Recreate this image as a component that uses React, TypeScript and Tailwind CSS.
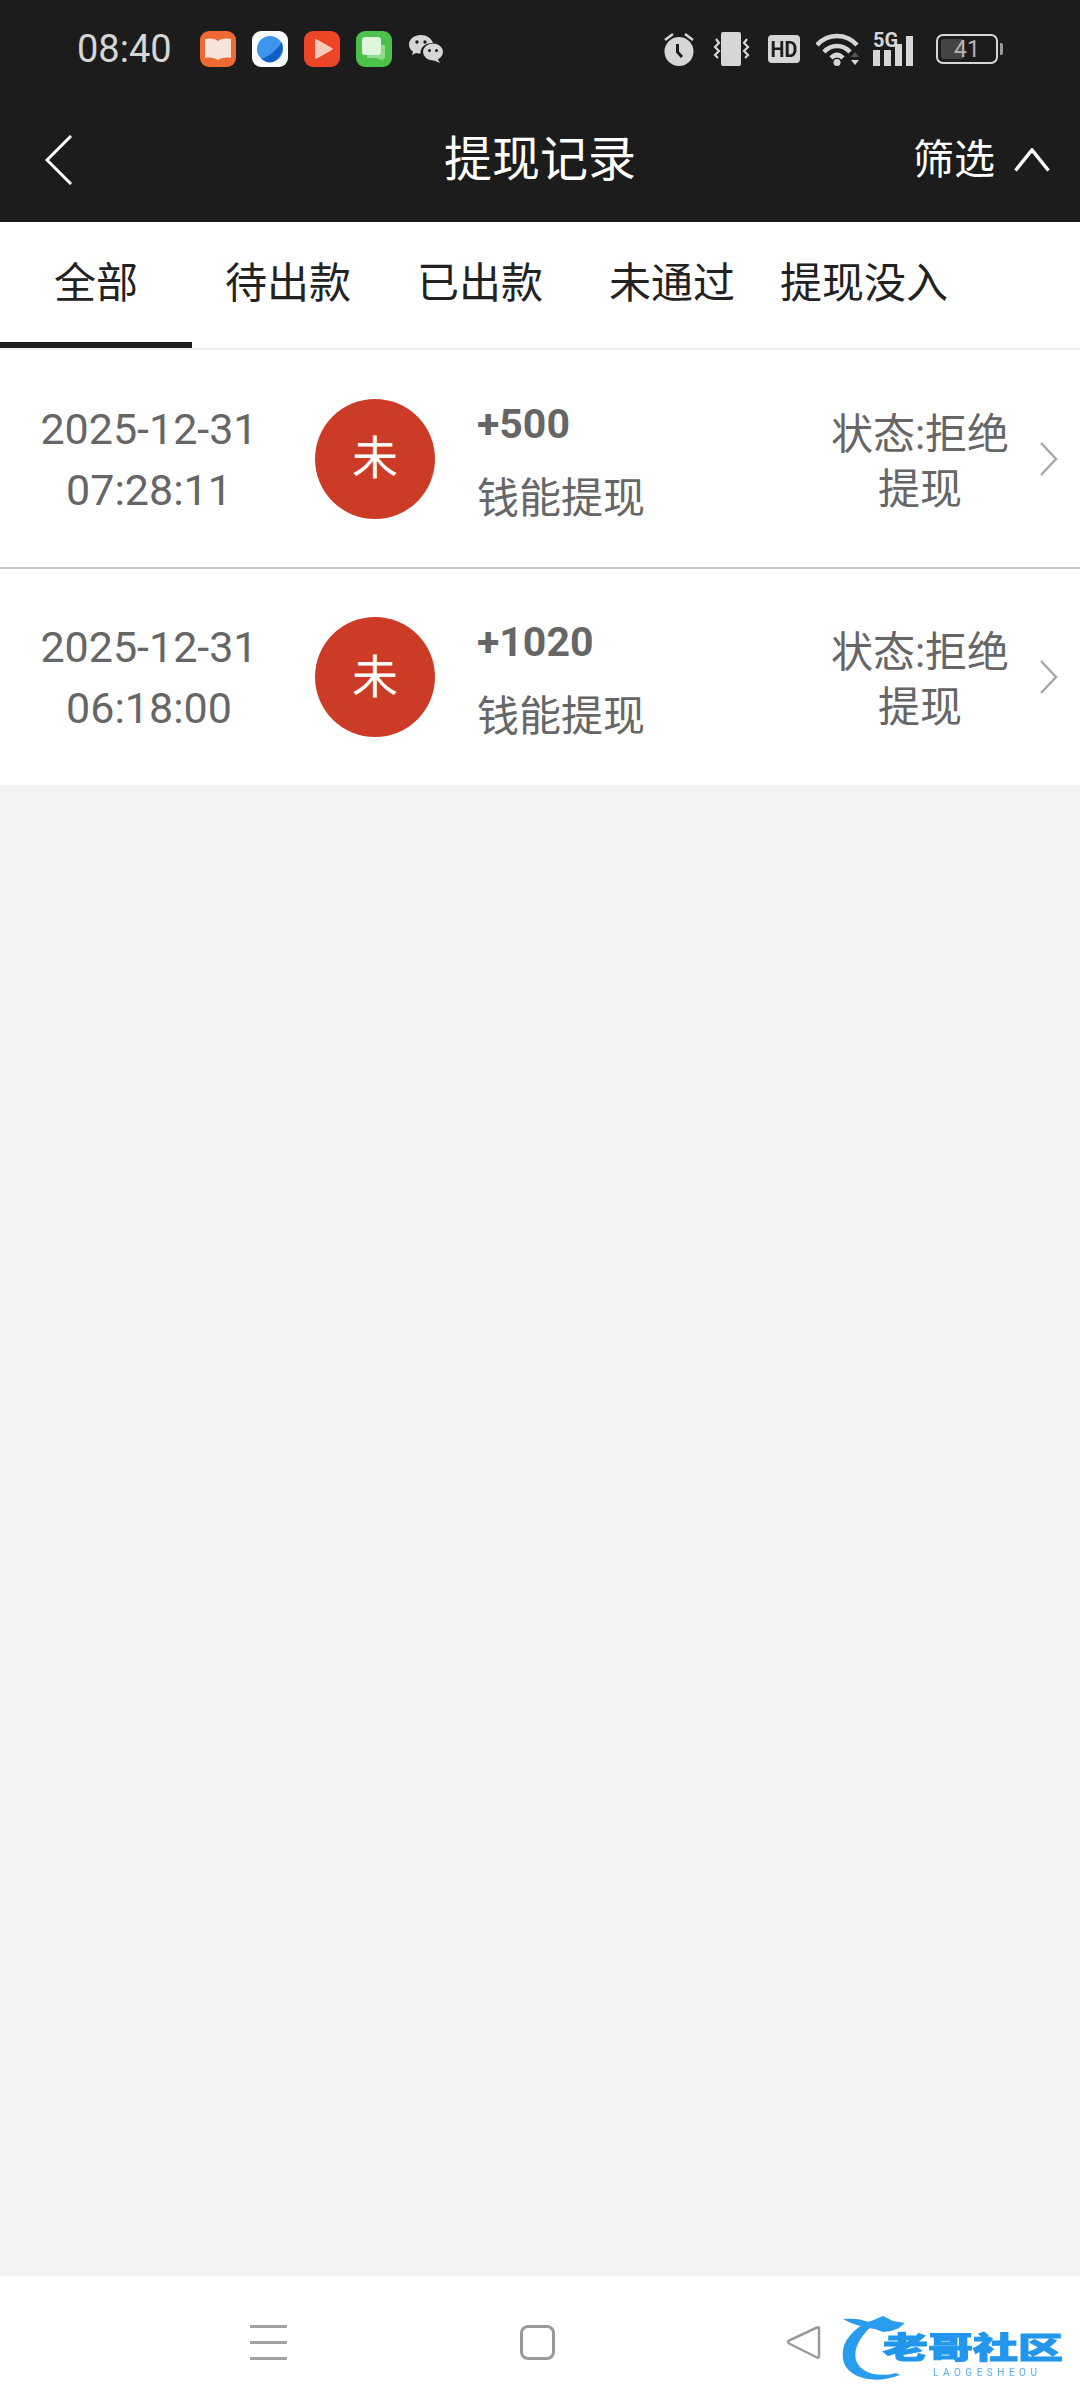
import React from 'react';

const FONT = "font-['Roboto','Noto_Sans_CJK_SC',sans-serif]";

const tabs = ['全部', '待出款', '已出款', '未通过', '提现没入'];

const records = [
  { date: '2025-12-31', time: '07:28:11', amount: '+500', height: 'h-[217px]' },
  { date: '2025-12-31', time: '06:18:00', amount: '+1020', height: 'h-[216px]' },
];

const AppIcons = () => (
  <div className="ml-[28px] flex items-center gap-[16px]">
    <svg width="36" height="36" viewBox="0 0 36 36">
      <rect width="36" height="36" rx="9" fill="#ee6a32" />
      <path d="M5 8c4-1 10-1 13 2 3-3 9-3 13-2v19c-5-1-10 0-13 2-3-2-8-3-13-2z" fill="#f6e4da" />
    </svg>
    <svg width="36" height="36" viewBox="0 0 36 36">
      <rect width="36" height="36" rx="9" fill="#f8fafc" />
      <circle cx="18" cy="18" r="13" fill="#3f95ee" />
      <path d="M10 28C17 25 25 19 30 11c2 8-1 16-9 20-4 1-8 0-11-3z" fill="#0f5fc4" />
    </svg>
    <svg width="36" height="36" viewBox="0 0 36 36">
      <rect width="36" height="36" rx="9" fill="#ee4526" />
      <path d="M11 9.500c0-1 1-1.500 2-1l15 8.500c1 .5 1 1.500 0 2L13 27.500c-1 .5-2 0-2-1z" fill="#f9c9b8" />
    </svg>
    <svg width="36" height="36" viewBox="0 0 36 36">
      <rect width="36" height="36" rx="9" fill="#4cc24a" />
      <path d="M11 14h18v13l-3 2-5-2H11z" fill="#8fdc8c" />
      <rect x="6" y="6" width="19" height="18" rx="3" fill="#dff5dc" />
    </svg>
    <svg width="34" height="29" viewBox="0 0 34 29" className="ml-[1px]">
      <path d="M12 0C5.500 0 0 4 0 9.500c0 3 1.500 5.500 4 7.200L3 20l4-2c1.500.5 3 .6 4.500.6C11 12 17 7.500 24 8 22.500 3.300 17.500 0 12 0z" fill="#d6d6d6" />
      <ellipse cx="24" cy="17" rx="10" ry="8.500" fill="#d6d6d6" />
      <path d="M28 23l3 5-7-3z" fill="#d6d6d6" />
      <circle cx="8" cy="7" r="1.700" fill="#1c1c1c" />
      <circle cx="16" cy="7" r="1.700" fill="#1c1c1c" />
      <circle cx="20.500" cy="15.500" r="1.500" fill="#1c1c1c" />
      <circle cx="27.500" cy="15.500" r="1.500" fill="#1c1c1c" />
    </svg>
  </div>
);

const SystemIcons = () => (
  <div className="flex items-center">
    <svg width="32" height="34" viewBox="0 0 32 34">
      <circle cx="16" cy="19.500" r="14.500" fill="#d6d6d6" />
      <path d="M2 8l8-6M30 8l-8-6" stroke="#d6d6d6" strokeWidth="2.500" />
      <path d="M14.500 12v8l4.500 5" stroke="#1c1c1c" strokeWidth="3" fill="none" />
    </svg>
    <svg width="37" height="34" viewBox="0 0 37 34" className="ml-[18px]">
      <rect x="8" y="0" width="20" height="34" rx="2" fill="#d6d6d6" />
      <path d="M3 7l3 4-4 4 4 4-4 4 3 3M34 7l-3 4 4 4-4 4 4 4-3 3" stroke="#d6d6d6" strokeWidth="2.200" fill="none" />
    </svg>
    <div className="ml-[18px] flex h-[28px] w-[32px] items-center justify-center rounded-[4px] bg-[#d6d6d6] text-[22px] font-bold text-[#1c1c1c]">
      <span className="scale-x-90">HD</span>
    </div>
    <svg width="47" height="33" viewBox="0 0 47 33" className="ml-[16px]">
      <path d="M1 12C12 0 30 0 41 12M8 19c7-8 19-8 26 0M15 25c4-4 8-4 12 0" stroke="#d6d6d6" strokeWidth="4.500" fill="none" />
      <circle cx="21" cy="29.500" r="3.500" fill="#d6d6d6" />
      <path d="M35 24l4-5 4 5z" fill="#555" />
      <path d="M35 27h8l-4 5z" fill="#d6d6d6" />
    </svg>
    <div className="relative ml-[10px] flex h-[33px] w-[47px] items-end gap-[4px]">
      <span className="absolute left-0 top-[-3px] text-[20px] leading-[20px] font-bold text-[#d6d6d6]">5G</span>
      <div className="h-[16px] w-[7px] bg-[#d6d6d6]" />
      <div className="h-[16px] w-[7px] bg-[#d6d6d6]" />
      <div className="h-[22px] w-[7px] bg-[#d6d6d6]" />
      <div className="h-[30px] w-[7px] bg-[#d6d6d6]" />
    </div>
    <div className="relative ml-[16px] flex h-[30px] w-[62px] items-center justify-center overflow-hidden rounded-[7px] border-2 border-[#d6d6d6]">
      <div className="absolute inset-y-[3px] left-[3px] w-[23px] rounded-[3px] bg-[#444]" />
      <span className="relative text-[23px] leading-none text-[#b5b5b5]">41</span>
    </div>
    <div className="ml-[2px] h-[12px] w-[3px] rounded-r-[2px] bg-[#999]" />
  </div>
);

const Watermark = () => (
  <div className="absolute left-[838px] top-[2313px] h-[76px] w-[232px] blur-[0.6px]">
    <svg width="90" height="76" viewBox="0 0 90 76" className="absolute left-0 top-0">
      <path d="M32 8C10 18 1 34 6 50c6 15 30 22 56 12-3-2-5-2-8-1-18 3-32-2-36-14-3-11 4-24 18-36z" fill="#2a9cee" />
      <path d="M5 6c10-1 18 0 26 3l14-6 10 5 12 2-6 5-8 3-8 1-8-3C22 14 12 10 5 6z" fill="#2a9cee" />
    </svg>
    <div className="absolute left-[45px] top-[12px] origin-left scale-y-[0.66] text-[45px] leading-[45px] font-black whitespace-nowrap text-[#2196ec] [-webkit-text-stroke:1.5px_#2196ec]">
      老哥社区
    </div>
    <div className="absolute left-[95px] top-[54px] text-[10px] leading-[12px] tracking-[4.500px] whitespace-nowrap text-[#5aaee8]">
      LAOGESHEOU
    </div>
  </div>
);

const RecordRow = ({ record }: { record: (typeof records)[number] }) => (
  <div className={`flex items-center bg-white ${record.height}`}>
    <div className="w-[296px] pt-[2px] pl-[2px] text-center text-[43px] leading-[61px] text-[#666]">
      <div>{record.date}</div>
      <div>{record.time}</div>
    </div>
    <div className="ml-[19px] flex h-[120px] w-[120px] items-center justify-center rounded-full bg-[#cc3b25] text-[46px] text-white">
      未
    </div>
    <div className="ml-[42px] flex-1 pt-[5px] text-[#666]">
      <div className="text-[41px] leading-[48px] font-bold">{record.amount}</div>
      <div className="mt-[27px] text-[42px] leading-[48px]">钱能提现</div>
    </div>
    <div className="w-[190px] pt-[6px] text-center text-[42px] leading-[55px] text-[#666]">状态:拒绝 提现</div>
    <svg width="24" height="36" viewBox="0 0 24 36" className="mr-[19px] ml-[22px]">
      <path d="M4 2l15 16L4 34" stroke="#a8a8a8" strokeWidth="2.500" fill="none" />
    </svg>
  </div>
);

export default function App() {
  return (
    <div className={`relative flex h-[2408px] w-[1080px] flex-col overflow-hidden bg-[#f3f3f3] ${FONT}`}>
      {/* top dark area */}
      <div className="h-[222px] bg-[#1c1c1c]">
        <div className="flex h-[98px] items-center justify-between pr-[77px] pl-[77px]">
          <div className="flex items-center">
            <span className="text-[38px] leading-none text-[#d6d6d6]">08:40</span>
            <AppIcons />
          </div>
          <SystemIcons />
        </div>
        <div className="flex h-[124px] items-center pr-[30px] pl-[45px]">
          <div className="flex w-[180px]">
            <svg width="28" height="50" viewBox="0 0 28 50">
              <path d="M26 1L2 25l24 24" stroke="#fff" strokeWidth="3" fill="none" />
            </svg>
          </div>
          <div className="flex-1 pr-[15px] text-center text-[48px] leading-none text-white">提现记录</div>
          <div className="flex w-[180px] items-center justify-end gap-[19px] text-[41px] leading-none text-white">
            <span>筛选</span>
            <svg width="36" height="24" viewBox="0 0 36 24">
              <path d="M1.500 22.500L18 2l16.500 20.500" stroke="#fff" strokeWidth="3.500" fill="none" />
            </svg>
          </div>
        </div>
      </div>

      {/* tabs */}
      <div className="flex h-[128px] border-b-2 border-[#efefef] bg-white">
        {tabs.map((tab, i) => (
          <div
            key={tab}
            className={`flex h-[126px] w-[192px] shrink-0 items-center justify-center pt-[3px] text-[42px] whitespace-nowrap text-[#222] ${
              i === 0 ? 'border-b-[6px] border-[#1c1c1c]' : 'pb-[6px]'
            }`}
          >
            {tab}
          </div>
        ))}
      </div>

      {/* records */}
      <RecordRow record={records[0]} />
      <div className="h-[2px] bg-[#c9c9c9]" />
      <RecordRow record={records[1]} />

      <div className="flex-1" />

      {/* bottom nav */}
      <div className="flex h-[132px] items-center bg-white">
        <div className="ml-[250px] flex h-[35px] w-[37px] flex-col justify-between">
          <div className="h-[3px] bg-[#a3a3a3]" />
          <div className="h-[3px] bg-[#a3a3a3]" />
          <div className="h-[3px] bg-[#a3a3a3]" />
        </div>
        <div className="ml-[233px] h-[35px] w-[35px] rounded-[8px] border-[3px] border-[#9a9a9a]" />
        <svg width="36" height="34" viewBox="0 0 36 34" className="ml-[231px]">
          <path d="M33 2.500v29c0 1-1 1.500-2 1L3 18.500c-1.200-.8-1.200-2 0-3l28-13c1-.5 2 0 2 0z" stroke="#9a9a9a" strokeWidth="2.500" fill="none" />
        </svg>
      </div>

      <Watermark />
    </div>
  );
}
